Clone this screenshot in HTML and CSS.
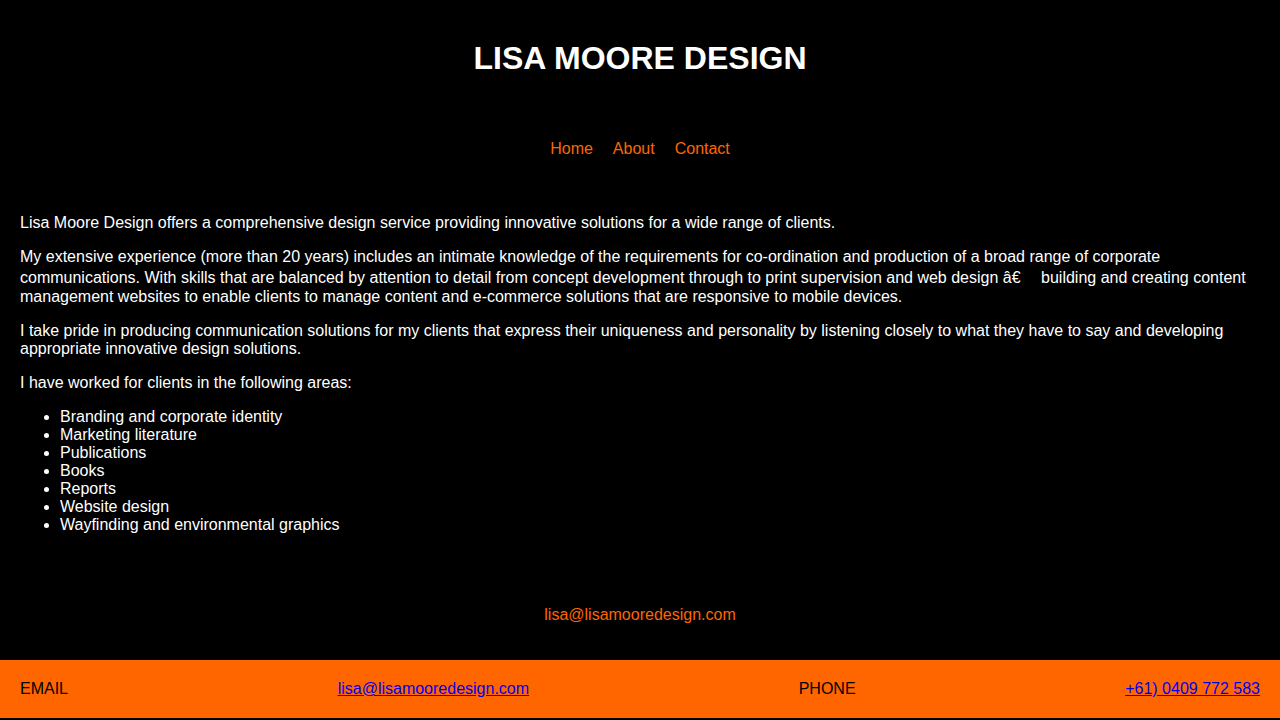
FILE: index.html
```html
<!DOCTYPE html>
<html lang="en">
<head>
<meta charset="utf-8">
<title>Lisa Moore Design</title>
<link rel="stylesheet" href="styles.css">
</head>
<body>
<header class="site-header">
  <h1 class="site-title">LISA MOORE DESIGN</h1>
  <nav class="site-nav">
    <a href="#">Home</a>
    <a href="#">About</a>
    <a href="#">Contact</a>
  </nav>
</header>
<main class="content">
  <p>Lisa Moore Design offers a comprehensive design service providing innovative solutions for a wide range of clients.</p>
  <p>My extensive experience (more than 20 years) includes an intimate knowledge of the requirements for co-ordination and production of a broad range of corporate communications. With skills that are balanced by attention to detail from concept development through to print supervision and web design â€<span class="ctl">&#x2003;</span> building and creating content management websites to enable clients to manage content and e-commerce solutions that are responsive to mobile devices.</p>
  <p>I take pride in producing communication solutions for my clients that express their uniqueness and personality by listening closely to what they have to say and developing appropriate innovative design solutions.</p>
  <p>I have worked for clients in the following areas:</p>
  <ul class="areas">
    <li>Branding and corporate identity</li>
    <li>Marketing literature</li>
    <li>Publications</li>
    <li>Books</li>
    <li>Reports</li>
    <li>Website design</li>
    <li>Wayfinding and environmental graphics</li>
  </ul>
</main>
<footer class="site-footer">
  <a class="footer-mail" href="#">lisa@lisamooredesign.com</a>
</footer>
<div class="contact-bar">
  <span class="label">EMAIL</span>
  <a class="bar-link" href="#">lisa@lisamooredesign.com</a>
  <span class="label">PHONE</span>
  <a class="bar-link" href="#">+61) 0409 772 583</a>
</div>
</body>
</html>
```

FILE: styles.css
```css
html, body {
  margin: 0;
  padding: 0;
}

body {
  background: #000;
  color: #fff;
  font-family: "Liberation Sans", Arial, sans-serif;
  font-size: 16px;
}

.site-header {
  padding: 40px 20px 0;
  text-align: center;
}

.site-title {
  margin: 0;
  font-size: 32px;
  line-height: 37px;
  font-weight: bold;
}

.site-nav {
  margin-top: 63px;
  display: flex;
  justify-content: center;
  gap: 20px;
}

.site-nav a {
  color: #ff6600;
  text-decoration: none;
}

.content {
  padding: 40px 20px 0;
}

.content p {
  margin: 16px 0;
}

.ctl {
  font-family: "Noto Sans", sans-serif;
}

.areas {
  margin: 16px 0;
  padding-left: 40px;
}

.site-footer {
  padding: 56px 20px 36px;
  text-align: center;
}

.footer-mail {
  color: #ff6600;
  text-decoration: none;
}

.contact-bar {
  background: #ff6600;
  color: #000;
  padding: 20px;
  display: flex;
  justify-content: space-between;
}

.bar-link {
  color: #0000ee;
  text-decoration: underline;
}
```
